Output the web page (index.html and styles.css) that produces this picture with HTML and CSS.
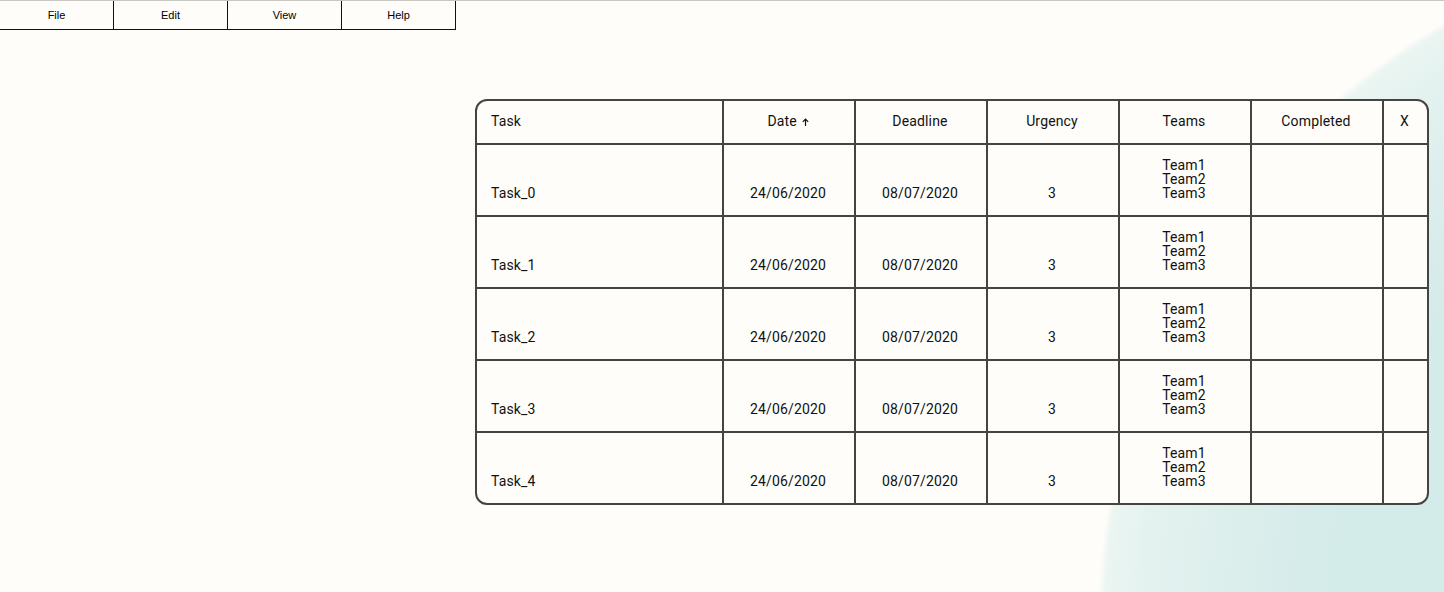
FILE: index.html
```html
<!DOCTYPE html>
<html lang="en">
<head>
<meta charset="utf-8">
<title>Tasks</title>
<link rel="stylesheet" href="styles.css">
</head>
<body>
<nav class="menubar">
  <button class="menu-btn">File</button>
  <button class="menu-btn">Edit</button>
  <button class="menu-btn">View</button>
  <button class="menu-btn">Help</button>
</nav>
<main class="content">
  <div class="table-wrap">
    <table class="tasks">
      <colgroup>
        <col class="c-task"><col class="c-mid"><col class="c-mid"><col class="c-mid"><col class="c-mid"><col class="c-mid"><col class="c-x">
      </colgroup>
      <thead>
        <tr>
          <th class="left">Task</th>
          <th>Date <svg class="arrow" width="7" height="8" viewBox="0 0 7 8" aria-hidden="true"><path d="M3.5 8V1.2M0.8 3.8L3.5 1.1L6.2 3.8" fill="none" stroke="#111" stroke-width="1.2"/></svg></th>
          <th>Deadline</th>
          <th>Urgency</th>
          <th>Teams</th>
          <th>Completed</th>
          <th>X</th>
        </tr>
      </thead>
      <tbody>
        <tr><td class="left">Task_0</td><td>24/06/2020</td><td>08/07/2020</td><td>3</td><td>Team1<br>Team2<br>Team3</td><td></td><td></td></tr>
        <tr><td class="left">Task_1</td><td>24/06/2020</td><td>08/07/2020</td><td>3</td><td>Team1<br>Team2<br>Team3</td><td></td><td></td></tr>
        <tr><td class="left">Task_2</td><td>24/06/2020</td><td>08/07/2020</td><td>3</td><td>Team1<br>Team2<br>Team3</td><td></td><td></td></tr>
        <tr><td class="left">Task_3</td><td>24/06/2020</td><td>08/07/2020</td><td>3</td><td>Team1<br>Team2<br>Team3</td><td></td><td></td></tr>
        <tr><td class="left">Task_4</td><td>24/06/2020</td><td>08/07/2020</td><td>3</td><td>Team1<br>Team2<br>Team3</td><td></td><td></td></tr>
      </tbody>
    </table>
  </div>
</main>
</body>
</html>
```

FILE: styles.css
```css
html, body {
  margin: 0;
  padding: 0;
}
html {
  background: #fefdf9;
}
body {
  min-height: 592px;
  box-sizing: border-box;
  border-top: 1px solid #c9c7c2;
  background-color: #fefdf9;
  background-image: radial-gradient(circle 692px at 1790px 620px, #d3ebe9 0%, #d3ebe9 65%, #dbeeec 80%, #e3f2ef 93%, #ebf5f2 99%, rgba(254,253,249,0) 100%);
  background-repeat: no-repeat;
  font-family: Roboto, "Noto Sans", sans-serif;
  color: #111;
}
.menubar {
  display: flex;
  width: 456px;
}
.menu-btn {
  width: 114px;
  height: 29px;
  margin: 0;
  padding: 0;
  background: transparent;
  border: 0;
  border-right: 1px solid #111;
  border-bottom: 1px solid #111;
  font-family: "Liberation Sans", Arial, sans-serif;
  font-size: 11px;
  color: #000;
  box-sizing: border-box;
}
.content {
  display: flex;
  padding-top: 69px;
  padding-left: 475px;
}
.table-wrap {
  border: 2px solid #444441;
  border-radius: 12px;
  overflow: hidden;
  background: #fefdf9;
}
.tasks {
  border-collapse: separate;
  border-spacing: 0;
  table-layout: fixed;
  width: 950px;
  font-size: 14px;
  line-height: 14px;
  letter-spacing: 0.15px;
}
.c-task { width: 247px; }
.c-mid { width: 132px; }
.c-x { width: 43px; }
.tasks th, .tasks td {
  padding: 13px 2px 15px 0;
  border-right: 2px solid #444441;
  border-bottom: 2px solid #444441;
  text-align: center;
  vertical-align: bottom;
  font-weight: 400;
  white-space: nowrap;
}
.tasks th:last-child, .tasks td:last-child {
  border-right: 0;
}
.tasks tbody tr:last-child td {
  border-bottom: 0;
}
.tasks td {
  height: 42px;
}
.tasks .left {
  text-align: left;
  padding-left: 14px;
}
.arrow {
  display: inline-block;
  vertical-align: baseline;
  margin-left: 1px;
}
```
